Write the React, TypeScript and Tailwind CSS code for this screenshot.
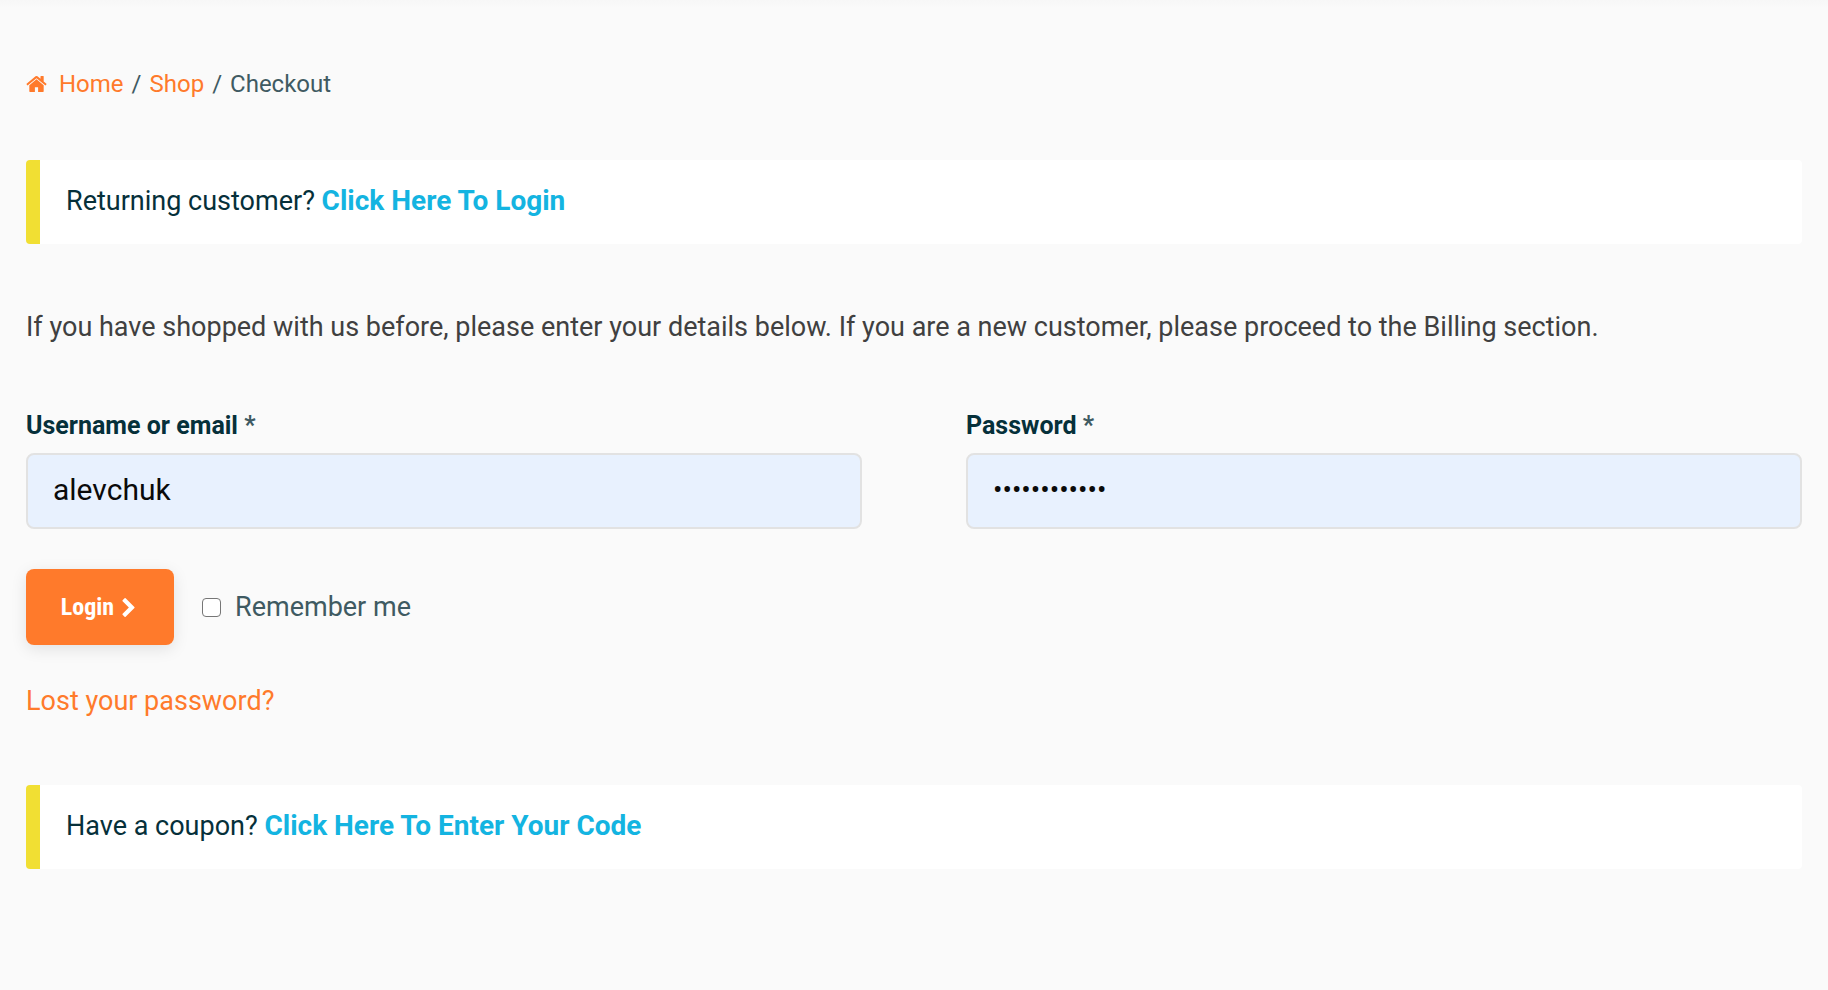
import { useState } from 'react';

function HomeIcon() {
  return (
    <svg className="w-[21px] h-4 shrink-0" viewBox="0 253 1664 1283" fill="currentColor" aria-hidden="true">
      <path d="M1408 992v480q0 26-19 45t-45 19h-384v-384h-256v384h-384q-26 0-45-19t-19-45v-480q0-1 .5-3t.5-3l575-474 575 474q1 2 1 6zm223-69l-62 74q-8 9-21 11h-3q-13 0-21-7l-692-577-692 577q-12 8-24 7-13-2-21-11l-62-74q-8-10-7-23.5t11-21.5l719-599q32-26 76-26t76 26l244 204v-195q0-14 9-23t23-9h192q14 0 23 9t9 23v408l219 182q10 8 11 21.5t-7 23.5z" />
    </svg>
  );
}

function ChevronIcon() {
  return (
    <svg className="w-[13px] h-[19px] shrink-0" viewBox="346 26 1036 1612" fill="currentColor" aria-hidden="true">
      <path d="M1363 877l-742 742q-19 19-45 19t-45-19l-166-166q-19-19-19-45t19-45l531-531-531-531q-19-19-19-45t19-45l166-166q19-19 45-19t45 19l742 742q19 19 19 45t-19 45z" />
    </svg>
  );
}

type NoticeProps = {
  text: string;
  link: string;
};

function Notice({ text, link }: NoticeProps) {
  return (
    <div className="flex items-center min-h-[84px] border-l-[14px] border-[#f1df33] rounded-sm bg-white px-[26px] pb-[2px]">
      <p className="text-[27px] leading-8 text-[#06303a]">
        {text}{' '}
        <a href="#" className="text-[28px] font-bold text-[#14b4e1]">{link}</a>
      </p>
    </div>
  );
}

type FieldProps = {
  id: string;
  label: string;
  type: string;
  value: string;
  onChange: (value: string) => void;
};

function Field({ id, label, type, value, onChange }: FieldProps) {
  return (
    <div className="flex flex-col gap-[11px]">
      <label htmlFor={id} className="text-[25px] leading-8 font-bold text-[#06303a]">
        {label} <span className="text-[#3f5a62]">*</span>
      </label>
      <input
        id={id}
        type={type}
        value={value}
        onChange={(e) => onChange(e.target.value)}
        className={`w-full h-[76px] rounded-lg border-2 border-[#e2e2e2] bg-[#e8f1fe] px-[25px] pb-1 text-[#0a0a0a] outline-none ${type === 'password' ? 'text-[28px]' : 'text-3xl'}`}
      />
    </div>
  );
}

export default function App() {
  const [username, setUsername] = useState<string>('alevchuk');
  const [password, setPassword] = useState<string>('bitcoin12345');
  const [remember, setRemember] = useState<boolean>(false);

  return (
    <div className="min-h-screen bg-[#fafafa] font-[Roboto,sans-serif]">
      <div className="h-2 bg-linear-to-b from-[#f7f7f7] to-[#fafafa]"></div>
      <main className="px-[26px] pt-[60px] pb-20">
        <nav className="flex items-center gap-2 text-2xl text-[#3f5a62]">
          <a href="#" className="flex items-center gap-3 text-[#ff7a2b]">
            <HomeIcon />
            Home
          </a>
          <span>/</span>
          <a href="#" className="text-[#ff7a2b]">Shop</a>
          <span>/</span>
          <span>Checkout</span>
        </nav>

        <div className="mt-15">
          <Notice text="Returning customer?" link="Click Here To Login" />
        </div>

        <form onSubmit={(e) => e.preventDefault()}>
          <p className="mt-[61px] text-[27px] leading-11 text-[#404040]">
            If you have shopped with us before, please enter your details below. If you are a new customer, please proceed to the Billing section.
          </p>

          <div className="mt-[61px] grid grid-cols-2 gap-26">
            <Field id="username" label="Username or email" type="text" value={username} onChange={setUsername} />
            <Field id="password" label="Password" type="password" value={password} onChange={setPassword} />
          </div>

          <div className="mt-10 flex items-center gap-7">
            <button
              type="submit"
              className="flex items-center justify-center gap-2 w-[148px] h-[76px] pr-1 rounded-lg bg-[#ff7a2b] text-2xl font-bold text-white shadow-[0_4px_16px_rgba(0,0,0,0.1)] font-['Liberation_Sans_Narrow','Roboto_Condensed',Roboto,sans-serif]"
            >
              Login
              <ChevronIcon />
            </button>
            <label htmlFor="remember" className="flex items-center gap-[14px] text-[27px] leading-10 text-[#3f5a62]">
              <input
                id="remember"
                type="checkbox"
                checked={remember}
                onChange={(e) => setRemember(e.target.checked)}
                className="size-[19px] appearance-none rounded-[4px] border border-[#767676] bg-white checked:border-[#0075ff] checked:bg-[#0075ff]"
              />
              Remember me
            </label>
          </div>

          <a href="#" className="mt-9 inline-block text-[27px] leading-10 text-[#ff7a2b]">Lost your password?</a>
        </form>

        <div className="mt-16">
          <Notice text="Have a coupon?" link="Click Here To Enter Your Code" />
        </div>
      </main>
    </div>
  );
}
